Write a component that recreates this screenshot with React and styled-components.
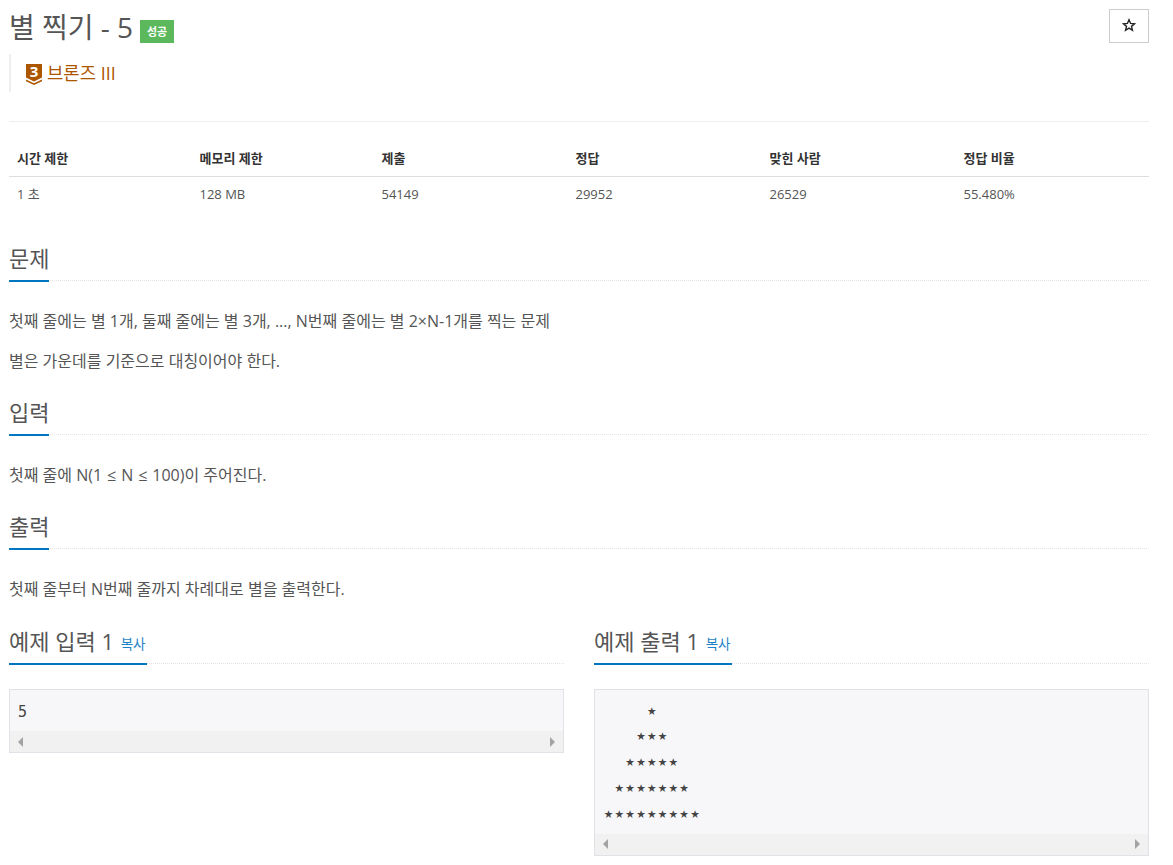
import React from "react";
import styled, { createGlobalStyle } from "styled-components";

const GlobalStyle = createGlobalStyle`
  * {
    box-sizing: border-box;
  }
  body {
    margin: 0;
    background: #fff;
    color: #555;
    font-family: "Open Sans", "Noto Sans CJK KR", sans-serif;
    font-size: 14px;
    line-height: 1.42857;
  }
`;

const stats = [
  { label: "시간 제한", value: "1 초", width: 182.5 },
  { label: "메모리 제한", value: "128 MB", width: 182 },
  { label: "제출", value: "54149", width: 194 },
  { label: "정답", value: "29952", width: 194 },
  { label: "맞힌 사람", value: "26529", width: 194 },
  { label: "정답 비율", value: "55.480%", width: 193.5 },
];

const outputLines = ["    ★", "   ★★★", "  ★★★★★", " ★★★★★★★", "★★★★★★★★★"];

const Section = ({ title, children }) => (
  <SectionBox>
    <Headline>
      <HeadlineTitle>{title}</HeadlineTitle>
    </Headline>
    <SectionBody>{children}</SectionBody>
  </SectionBox>
);

const Sample = ({ title, lines, stars }) => (
  <div>
    <Headline>
      <HeadlineTitle>
        {title} <CopyLink>복사</CopyLink>
      </HeadlineTitle>
    </Headline>
    <SampleBox>
      <SamplePre $stars={stars}>{lines.join("\n")}</SamplePre>
      <ScrollBar>
        <ArrowLeft />
        <ArrowRight />
      </ScrollBar>
    </SampleBox>
  </div>
);

export default function App() {
  return (
    <Page>
      <GlobalStyle />
      <TitleRow>
        <Title>
          별 찍기 - 5 <Badge>성공</Badge>
        </Title>
        <StarButton aria-label="즐겨찾기">
          <svg width="14" height="14" viewBox="0 0 24 24" fill="none" stroke="#222" strokeWidth="2.4">
            <path d="M12 3l2.700 6.300 6.800.6-5.200 4.400 1.600 6.700L12 17.400 6.100 21l1.600-6.700L2.500 9.900l6.800-.6z" />
          </svg>
        </StarButton>
      </TitleRow>
      <TierQuote>
        <TierBadge>
          <svg width="16" height="21" viewBox="0 0 16 21">
            <path d="M0 0h16v13.500L8 17.500 0 13.500z" fill="#ad5600" />
            <path d="M0 15.500l8 3.700 8-3.700v1.800L8 21l-8-3.700z" fill="#ad5600" />
          </svg>
          <TierNumber>3</TierNumber>
        </TierBadge>
        <TierLabel>브론즈 III</TierLabel>
      </TierQuote>
      <Divider />
      <StatsTable>
        <thead>
          <tr>
            {stats.map((s) => (
              <StatHead key={s.label} style={{ width: s.width }}>
                {s.label}
              </StatHead>
            ))}
          </tr>
        </thead>
        <tbody>
          <tr>
            {stats.map((s) => (
              <StatCell key={s.label}>{s.value}</StatCell>
            ))}
          </tr>
        </tbody>
      </StatsTable>
      <Section title="문제">
        <Paragraph>첫째 줄에는 별 1개, 둘째 줄에는 별 3개, ..., N번째 줄에는 별 2×N-1개를 찍는 문제</Paragraph>
        <Paragraph>별은 가운데를 기준으로 대칭이어야 한다.</Paragraph>
      </Section>
      <Section title="입력">
        <Paragraph>
          첫째 줄에 N(1 <MathSign>≤</MathSign> N <MathSign>≤</MathSign> 100)이 주어진다.
        </Paragraph>
      </Section>
      <Section title="출력">
        <Paragraph>첫째 줄부터 N번째 줄까지 차례대로 별을 출력한다.</Paragraph>
      </Section>
      <SampleRow>
        <Sample title="예제 입력 1" lines={["5"]} />
        <Sample title="예제 출력 1" lines={outputLines} stars />
      </SampleRow>
    </Page>
  );
}

const Page = styled.div`
  width: 1173px;
  padding: 0 24px 0 9px;
`;

const TitleRow = styled.div`
  display: flex;
  justify-content: space-between;
  align-items: flex-start;
  height: 54px;
  padding-top: 9px;
`;

const Title = styled.h1`
  margin: 0;
  font-size: 28px;
  font-weight: 400;
  line-height: 37px;
  color: #555;
`;

const Badge = styled.span`
  display: inline-block;
  position: relative;
  top: 1px;
  padding: 0 6.500px;
  height: 23px;
  line-height: 23px;
  background: #5cb85c;
  color: #fff;
  font-size: 11px;
  font-weight: 700;
  vertical-align: middle;
`;

const StarButton = styled.button`
  display: flex;
  align-items: center;
  justify-content: center;
  width: 40px;
  height: 34px;
  padding: 0 0 2px;
  background: #fff;
  border: 1px solid #ccc;
`;

const TierQuote = styled.blockquote`
  display: flex;
  align-items: center;
  gap: 5px;
  height: 38px;
  margin: 0;
  padding: 2px 0 0 15px;
  border-left: 2px solid #eee;
`;

const TierBadge = styled.span`
  position: relative;
  display: block;
  flex: none;
  width: 16px;
  height: 21px;
  svg {
    display: block;
  }
`;

const TierNumber = styled.span`
  position: absolute;
  top: 0;
  left: 0;
  width: 16px;
  color: #fff;
  font-size: 15px;
  font-weight: 700;
  line-height: 15px;
  text-align: center;
`;

const TierLabel = styled.span`
  font-size: 17.800px;
  color: #ad5600;
`;

const Divider = styled.hr`
  height: 1px;
  margin: 29px 0 0;
  border: 0;
  background: #eee;
`;

const StatsTable = styled.table`
  width: 1140px;
  margin: 20px 0 34px;
  border-collapse: collapse;
  table-layout: fixed;
  font-size: 13px;
`;

const StatHead = styled.th`
  padding: 0 8px;
  height: 34px;
  border-bottom: 1px solid #ddd;
  color: #333;
  font-weight: 700;
  text-align: left;
  vertical-align: middle;
`;

const StatCell = styled.td`
  padding: 2px 8px 0;
  height: 35px;
  color: #555;
  vertical-align: middle;
`;

const SectionBox = styled.section`
  margin-top: 18px;
`;

const Headline = styled.div`
  height: 36px;
  border-bottom: 1px dotted #e4e4e4;
`;

const HeadlineTitle = styled.h2`
  display: inline-block;
  height: 37px;
  margin: 0;
  border-bottom: 2px solid #0076c0;
  color: #555;
  font-size: 22px;
  font-weight: 400;
  line-height: 26px;
  white-space: nowrap;
`;

const SectionBody = styled.div`
  padding-top: 20px;
`;

const Paragraph = styled.p`
  margin: 0;
  font-size: 16px;
  line-height: 40px;
  color: #555;
`;

const MathSign = styled.span`
  margin: 0 0.800px;
`;

const SampleRow = styled.div`
  display: grid;
  grid-template-columns: 555px 555px;
  column-gap: 30px;
  align-items: start;
  margin-top: 19px;
`;

const CopyLink = styled.a`
  margin-left: 1px;
  padding-right: 1px;
  color: #1f82c6;
  font-size: 13.500px;
  line-height: 1;
  vertical-align: 1px;
`;

const SampleBox = styled.div`
  margin-top: 25px;
  border: 1px solid #e1e1e8;
  background: #f7f7f9;
`;

const SamplePre = styled.pre`
  margin: 0;
  padding: ${(p) => (p.$stars ? "7.700px 8px 7.700px 9px" : "9.500px 8px 5.900px")};
  font-family: "DejaVu Sans Mono", monospace;
  font-size: 15px;
  letter-spacing: 1.770px;
  line-height: 25.700px;
  color: #444;
`;

const ScrollBar = styled.div`
  display: flex;
  justify-content: space-between;
  align-items: center;
  height: 21px;
  padding: 0 8px;
  background: #f1f1f1;
`;

const ArrowLeft = styled.span`
  width: 0;
  height: 0;
  border-top: 5px solid transparent;
  border-bottom: 5px solid transparent;
  border-right: 5px solid #a3a3a3;
`;

const ArrowRight = styled.span`
  width: 0;
  height: 0;
  border-top: 5px solid transparent;
  border-bottom: 5px solid transparent;
  border-left: 5px solid #a3a3a3;
`;
